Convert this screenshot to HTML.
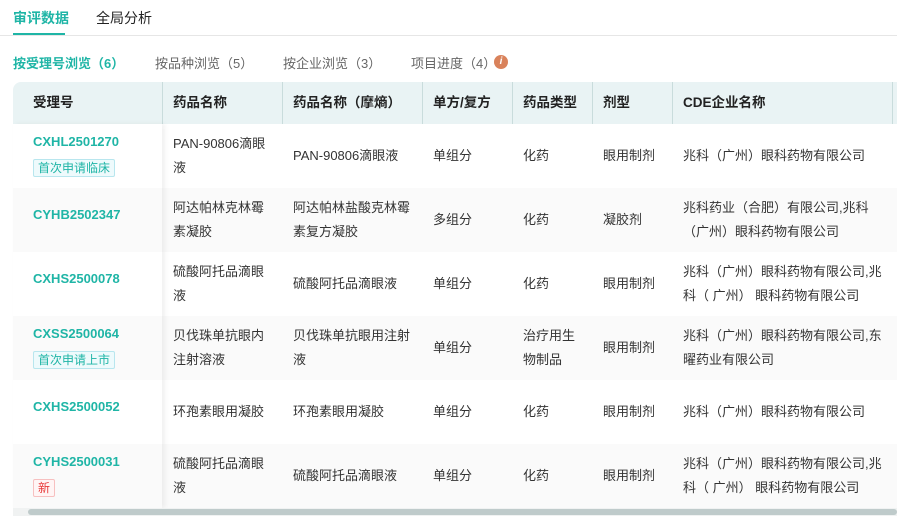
<!DOCTYPE html>
<html><head><meta charset="utf-8"><style>
*{margin:0;padding:0;box-sizing:border-box}
body{width:897px;height:530px;overflow:hidden;background:#fff;font-family:"Liberation Sans","Noto Sans CJK SC",sans-serif;color:#333;font-size:13px;position:relative}
.tab1{position:absolute;top:8px;left:13px;font-size:14px;font-weight:bold;color:#1fb5a6}
.tab2{position:absolute;top:8px;left:96px;font-size:14px;color:#222}
.uline{position:absolute;top:33px;left:13px;width:52px;height:3px;background:#1fb5a6}
.hr{position:absolute;top:35px;left:0;width:897px;height:1px;background:#e6e6e6}
.sub{position:absolute;top:53px;font-size:13px;color:#666}
.info{position:absolute;left:494px;top:55px;width:14px;height:14px;border-radius:50%;background:#d9825b;color:#fff;font-size:10px;font-style:italic;font-weight:bold;text-align:center;line-height:14px}
.thead{position:absolute;top:82px;left:13px;width:884px;height:42px;background:#e9f3f4;border-radius:8px 0 0 0}
.th{position:absolute;top:82px;height:42px;line-height:42px;font-weight:bold;font-size:13.5px;color:#222}
.vl{position:absolute;top:82px;width:1px;height:42px;background:#c9dcdc}
.row{position:absolute;left:13px;width:884px;height:64px}
.cell{position:absolute;font-size:13px;line-height:24px;color:#333}
.id{position:absolute;left:33px;font-weight:bold;color:#1fb5a6;font-size:13px}
.tag{position:absolute;left:33px;font-size:12px;line-height:16px;padding:0 4px;border:1px solid #b8e6ee;background:#eefafc;color:#1fb5a6;border-radius:2px}
.tag.red{border-color:#f7c0c0;background:#fff5f5;color:#e83a3a}
.fix{position:absolute;left:13px;top:124px;width:149px;height:384px;box-shadow:3px 0 5px rgba(0,0,0,.06)}
.track{position:absolute;left:13px;top:508px;width:884px;height:8px;background:#f0f2f2}
.thumb{position:absolute;left:28px;top:509px;width:869px;height:6px;background:#bfcbcb;border-radius:3px}
</style></head><body>
<div class="tab1">审评数据</div><div class="tab2">全局分析</div>
<div class="uline"></div><div class="hr"></div>
<div class="sub" style="left:13px;color:#1fb5a6;font-weight:bold">按受理号浏览（6）</div>
<div class="sub" style="left:155px">按品种浏览（5）</div>
<div class="sub" style="left:283px">按企业浏览（3）</div>
<div class="sub" style="left:411px">项目进度（4）</div><span class="info">i</span>

<div class="thead"></div>
<div class="th" style="left:33px">受理号</div>
<div class="th" style="left:173px">药品名称</div>
<div class="th" style="left:293px">药品名称（摩熵）</div>
<div class="th" style="left:433px">单方/复方</div>
<div class="th" style="left:523px">药品类型</div>
<div class="th" style="left:603px">剂型</div>
<div class="th" style="left:683px">CDE企业名称</div>
<div class="vl" style="left:162px"></div><div class="vl" style="left:282px"></div><div class="vl" style="left:422px"></div><div class="vl" style="left:512px"></div><div class="vl" style="left:592px"></div><div class="vl" style="left:672px"></div><div class="vl" style="left:892px"></div>

<div class="row" style="top:124px;background:#fff"></div>
<div class="row" style="top:188px;background:#fafafa"></div>
<div class="row" style="top:252px;background:#fff"></div>
<div class="row" style="top:316px;background:#fafafa"></div>
<div class="row" style="top:380px;background:#fff"></div>
<div class="row" style="top:444px;background:#fafafa"></div>
<div class="fix"></div>

<div class="id" style="top:134px">CXHL2501270</div><div class="tag" style="top:159px">首次申请临床</div>
<div class="cell" style="left:173px;top:132px;width:105px">PAN-90806滴眼液</div>
<div class="cell" style="left:293px;top:144px">PAN-90806滴眼液</div>
<div class="cell" style="left:433px;top:144px">单组分</div>
<div class="cell" style="left:523px;top:144px">化药</div>
<div class="cell" style="left:603px;top:144px">眼用制剂</div>
<div class="cell" style="left:683px;top:144px">兆科（广州）眼科药物有限公司</div>

<div class="id" style="top:207px">CYHB2502347</div>
<div class="cell" style="left:173px;top:196px;width:100px">阿达帕林克林霉素凝胶</div>
<div class="cell" style="left:293px;top:196px;width:122px">阿达帕林盐酸克林霉素复方凝胶</div>
<div class="cell" style="left:433px;top:208px">多组分</div>
<div class="cell" style="left:523px;top:208px">化药</div>
<div class="cell" style="left:603px;top:208px">凝胶剂</div>
<div class="cell" style="left:683px;top:196px;width:195px">兆科药业（合肥）有限公司,兆科（广州）眼科药物有限公司</div>

<div class="id" style="top:271px">CXHS2500078</div>
<div class="cell" style="left:173px;top:260px;width:100px">硫酸阿托品滴眼液</div>
<div class="cell" style="left:293px;top:272px">硫酸阿托品滴眼液</div>
<div class="cell" style="left:433px;top:272px">单组分</div>
<div class="cell" style="left:523px;top:272px">化药</div>
<div class="cell" style="left:603px;top:272px">眼用制剂</div>
<div class="cell" style="left:683px;top:260px;width:200px">兆科（广州）眼科药物有限公司,兆<br>科（ 广州） 眼科药物有限公司</div>

<div class="id" style="top:326px">CXSS2500064</div><div class="tag" style="top:351px">首次申请上市</div>
<div class="cell" style="left:173px;top:324px;width:100px">贝伐珠单抗眼内注射溶液</div>
<div class="cell" style="left:293px;top:324px;width:122px">贝伐珠单抗眼用注射液</div>
<div class="cell" style="left:433px;top:336px">单组分</div>
<div class="cell" style="left:523px;top:324px">治疗用生<br>物制品</div>
<div class="cell" style="left:603px;top:336px">眼用制剂</div>
<div class="cell" style="left:683px;top:324px;width:200px">兆科（广州）眼科药物有限公司,东<br>曜药业有限公司</div>

<div class="id" style="top:399px">CXHS2500052</div>
<div class="cell" style="left:173px;top:400px">环孢素眼用凝胶</div>
<div class="cell" style="left:293px;top:400px">环孢素眼用凝胶</div>
<div class="cell" style="left:433px;top:400px">单组分</div>
<div class="cell" style="left:523px;top:400px">化药</div>
<div class="cell" style="left:603px;top:400px">眼用制剂</div>
<div class="cell" style="left:683px;top:400px">兆科（广州）眼科药物有限公司</div>

<div class="id" style="top:454px">CYHS2500031</div><div class="tag red" style="top:479px">新</div>
<div class="cell" style="left:173px;top:452px;width:100px">硫酸阿托品滴眼液</div>
<div class="cell" style="left:293px;top:464px">硫酸阿托品滴眼液</div>
<div class="cell" style="left:433px;top:464px">单组分</div>
<div class="cell" style="left:523px;top:464px">化药</div>
<div class="cell" style="left:603px;top:464px">眼用制剂</div>
<div class="cell" style="left:683px;top:452px;width:200px">兆科（广州）眼科药物有限公司,兆<br>科（ 广州） 眼科药物有限公司</div>

<div class="track"></div><div class="thumb"></div>
</body></html>
